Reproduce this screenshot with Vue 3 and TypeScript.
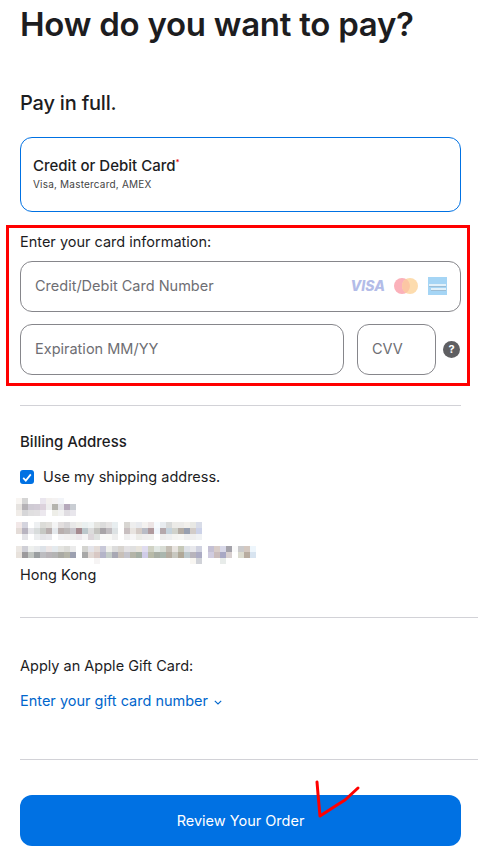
<template>
  <div class="page">
    <h1>How do you want to pay?</h1>
    <h2>Pay in full.</h2>

    <div class="option">
      <div class="option-title">Credit or Debit Card<sup>*</sup></div>
      <div class="option-sub">Visa, Mastercard, AMEX</div>
    </div>

    <section class="card-info">
      <div class="card-label">Enter your card information:</div>
      <div class="field number">
        <span>Credit/Debit Card Number</span>
        <div class="brands">
          <span class="visa">VISA</span>
          <svg width="24" height="16" viewBox="0 0 24 16">
            <circle cx="8" cy="8" r="8" fill="#fbb1ba" />
            <circle cx="16" cy="8" r="8" fill="#fddcae" />
            <path d="M12 1.100a8 8 0 0 1 0 13.800a8 8 0 0 1 0-13.800z" fill="#fcc6a4" />
          </svg>
          <svg width="19" height="18" viewBox="0 0 19 18">
            <rect width="19" height="18" fill="#a5d5f5" />
            <rect x="1" y="7" width="17" height="2" fill="#e2f1fa" />
            <rect x="1" y="9" width="17" height="1" fill="#9dbdd4" />
            <rect x="3" y="11" width="15" height="2" fill="#e2f1fa" />
            <rect x="3" y="13" width="15" height="1" fill="#9dbdd4" />
          </svg>
        </div>
      </div>
      <div class="row">
        <div class="field expiry">Expiration MM/YY</div>
        <div class="field cvv">CVV</div>
        <div class="help">?</div>
      </div>
    </section>

    <hr class="short first" />

    <h3>Billing Address</h3>
    <label class="check">
      <span class="box">
        <svg width="10" height="9" viewBox="0 0 10 9">
          <path d="M1.200 4.800l2.600 2.800L8.800 1.400" fill="none" stroke="#fff" stroke-width="1.700" />
        </svg>
      </span>
      Use my shipping address.
    </label>

    <!-- name and street were pixelated in the original -->
    <div class="mosaic" aria-hidden="true">
      <div v-for="(row, r) in mosaic" :key="r" class="mosaic-row">
        <i v-for="(c, i) in row.split(' ')" :key="i" :style="{ background: '#' + c }"></i>
      </div>
    </div>
    <div class="city">Hong Kong</div>

    <hr class="wide second" />

    <div class="gift-label">Apply an Apple Gift Card:</div>
    <a class="gift-link">
      Enter your gift card number
      <svg width="8" height="5" viewBox="0 0 8 5">
        <path d="M.8.8L4 4l3.200-3.200" fill="none" stroke="#0066cc" stroke-width="1.100" />
      </svg>
    </a>

    <hr class="wide third" />

    <div class="submit-wrap">
      <button class="submit">Review Your Order</button>
      <svg class="tick" width="46" height="38" viewBox="0 0 46 38">
        <path d="M2 2l1 12l2 22L22 25l8-5L43 8" fill="none" stroke="#ff0000" stroke-width="3" stroke-linecap="round" stroke-linejoin="round" />
      </svg>
    </div>
  </div>
</template>

<script setup lang="ts">
const mosaic: string[] = [
  'f8f5f2 d5d5d5 fff fff eae6ee f3f0ee f4f2f2 f2f4f8',
  'e6e3e0 b5b2b6 cfcbd4 d2ccd6 dcd2dc eee b5b4ae e4e4e8 b5a9bb c9cdd3',
  'f0ece8 d6d6d8 e0dfe0 e2e0e2 ece8ee fff eeeee8 f2f2f2 e0dde2 e8e6ec',
  'fff',
  'f2e8e8 d4d4de fff eef0f2 dcdcd8 e2e0dc f4f4f4 e2dede d8d6d8 e8e8e8 eeeeea eaf0f0 f0f4f4 e4e4e0 dcdcdc e6e4e4 e8eef0 fff d8d6d2 eee e8eaee f4f2f0 ece4e4 f6fbfe e8ecf0 d8dada ecebe8 ecebe9 f2f0ec e8e8e4 d8dce8',
  'e4dcd8 b8b4c0 e6e6ea d8dcdc c6c8c4 b8aeae e4e8ec b9afae bcb8b8 c8c6cc a58a90 bcc8cc dcdcdc c4c4c0 a8a4a8 c0bcc0 dde2e4 fff c8bfc0 e8e4e0 d4cbc6 b9bcc6 b09a9e f0f6fc b4a8ac c4d2dc d0d2cc b4aca4 98a0b0 d2ccc8 ccd2e8',
  'fff e4e4e8 fff eceef0 e4e4e8 e8e8ec fff f2f2f4 f2f0f0 eee ece8ec f4f4f4 dcd6da dfe2e0 f8f8f8 f8f8f6 eee fff f0f0f0 f6f6f6 ecece8 f0eeee f0f0ee fff ececec eeeff0 f4f4f2 f6f6f4 eee eee f0f2f4',
  'fff',
  'ece8e4 cfcfd6 eef0ee e8eaec dde2e8 ece6e6 e4eaee e4e4e0 dcdcd8 ebebeb fff d4d4d0 e4e4ea e4dcd8 c8c8d8 f0f0ec dcdcdc d8d4cf e4e2e4 e0e0e0 e8e4dc e0dcf0 d0d2c4 e2e8e4 d8dcd4 c4beb4 e8e4e0 c6c8b8 dfe2e8 e8e8ec d0d2e0 fff c4c0d4 d8ccc8 d8d8e8 a4a2aa fafafa cacacc d4c8c0 eef6fc',
  'e8e2dc 9c9a9c c0c4c0 9a9ea0 bcbcc0 b8b4b8 b4b4b4 aaaaa4 b4b4a8 9ca0b0 fff a8a8a8 e0d8d4 d8c8c4 b4b4c8 c4ccc8 a8a8b4 c8c0b8 c4c4cc b4b4a8 a4aea4 d0cce8 b8baa8 a8aea4 aab6ae b4aca0 c8c8c0 b0a898 bcc8cc b8b4bc acacc4 fff d0cce0 cabcbc a8a8c4 d8d0d0 fff dcdcd0 b8aca0 d8e4f0',
  'fff fff fff fff fff fff fff fff fff fff fff fff fff f6f4f4 fff fff fff fff fff fff fff fff fff fff fff fff fff fff fff f8f6f2 d0d2d8 fff fff fff e8ecea',
]
</script>

<style>
body {
  background: #fff;
}
</style>

<style scoped>
.page {
  height: 860px;
  overflow: hidden;
  padding-left: 20px;
  box-sizing: border-box;
  font-family: Inter, "Noto Sans", sans-serif;
  color: #1d1d1f;
  font-size: 14.500px;
}

h1 {
  margin: 3px 0 0;
  font-size: 33px;
  line-height: 42px;
  font-weight: 600;
  letter-spacing: -0.260px;
}

h2 {
  margin: 45px 0 0;
  font-size: 20px;
  line-height: 26px;
  font-weight: 500;
  letter-spacing: -0.200px;
}

.option {
  width: 441px;
  height: 75px;
  margin-top: 21px;
  padding: 19px 12px 0;
  box-sizing: border-box;
  border: 1px solid #0071e3;
  border-radius: 12px;
}

.option-title {
  font-size: 15px;
  line-height: 18px;
  font-weight: 500;
}

.option-title sup {
  color: #d00;
  font-size: 8px;
  line-height: 0;
}

.option-sub {
  margin-top: 2px;
  font-size: 10px;
  line-height: 14px;
  letter-spacing: 0.200px;
  color: #444;
}

.card-info {
  width: 464px;
  height: 161px;
  margin: 13px 0 0 -14px;
  padding: 5px 0 0 11px;
  box-sizing: border-box;
  border: 3px solid #ff0000;
}

.card-label {
  line-height: 18px;
}

.field {
  display: flex;
  align-items: center;
  height: 51px;
  padding-left: 14px;
  padding-bottom: 2px;
  box-sizing: border-box;
  border: 1px solid #86868b;
  border-radius: 12px;
  color: #6e6e73;
}

.number {
  width: 441px;
  margin-top: 10px;
  justify-content: space-between;
  padding-right: 13px;
}

.brands {
  display: flex;
  align-items: center;
  gap: 10px;
}

.visa {
  font-size: 14px;
  font-weight: 800;
  font-style: italic;
  color: #b3bce8;
  margin-right: -1px;
}

.row {
  display: flex;
  align-items: center;
  margin-top: 12px;
}

.expiry {
  width: 324px;
}

.cvv {
  width: 79px;
  margin-left: 13px;
}

.help {
  width: 17px;
  height: 17px;
  margin-left: 7px;
  border-radius: 50%;
  background: #5f5f62;
  color: #fff;
  font-size: 11px;
  font-weight: 700;
  line-height: 17px;
  text-align: center;
}

hr {
  margin: 0;
  border: 0;
  border-top: 1px solid #d2d2d7;
}

.short {
  width: 441px;
}

.wide {
  width: 458px;
}

.first {
  margin-top: 19px;
}

h3 {
  margin: 27px 0 0;
  font-size: 15px;
  line-height: 18px;
  font-weight: 500;
}

.check {
  display: flex;
  align-items: center;
  gap: 9px;
  margin-top: 16px;
  line-height: 20px;
}

.box {
  display: flex;
  align-items: center;
  justify-content: center;
  width: 14px;
  height: 14px;
  border-radius: 3px;
  background: #0071e3;
}

.mosaic {
  margin: 11px 0 0 -4px;
}

.mosaic-row {
  display: flex;
  height: 6px;
}

.mosaic-row i {
  display: block;
  width: 6px;
  height: 6px;
}

.city {
  margin-top: 2px;
  line-height: 18px;
}

.second {
  margin-top: 33px;
}

.gift-label {
  margin-top: 39px;
  line-height: 18px;
}

.gift-link {
  display: block;
  margin-top: 17px;
  line-height: 18px;
  color: #0066cc;
}

.gift-link svg {
  margin-left: 2px;
  vertical-align: 1px;
}

.third {
  margin-top: 49px;
}

.submit-wrap {
  position: relative;
  margin-top: 35px;
}

.submit {
  display: block;
  width: 441px;
  height: 51px;
  border: 0;
  border-radius: 12px;
  background: #0071e3;
  color: #fff;
  font-family: inherit;
  font-size: 14.500px;
  padding-top: 1px;
}

.tick {
  position: absolute;
  left: 295px;
  top: -15px;
}
</style>
